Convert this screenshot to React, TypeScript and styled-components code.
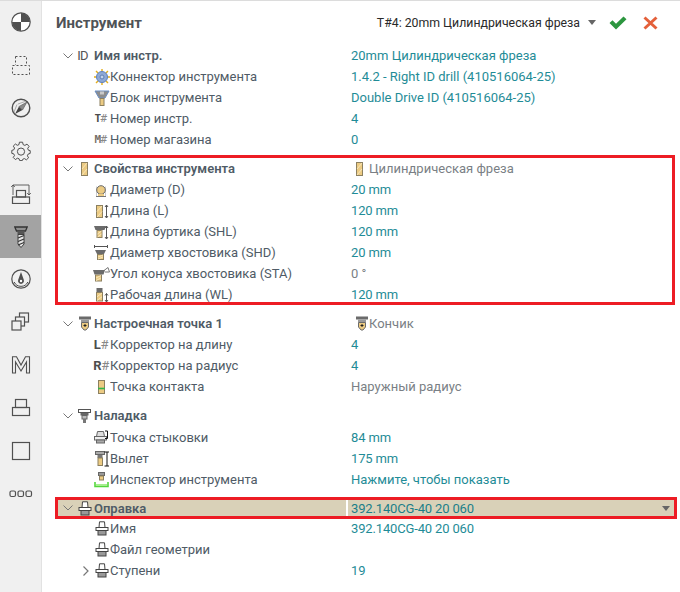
import React from 'react';
import styled, { createGlobalStyle } from 'styled-components';

const Global = createGlobalStyle`
  html, body { margin: 0; padding: 0; background: #fff; }
  body { font-family: Roboto, "Liberation Sans", sans-serif; }
  * { box-sizing: border-box; }
`;

const Page = styled.div`
  display: flex;
  width: 680px;
  height: 592px;
  overflow: hidden;
  border-top: 1px solid #dcdcdc;
  background: #fff;
`;
const Sidebar = styled.nav`
  flex: 0 0 42px;
  background: #f0f0f0;
  border-right: 1px solid #e2e2e2;
  display: flex;
  flex-direction: column;
`;
const SideItem = styled.div<{ $active?: boolean }>`
  height: 42.83px;
  flex: none;
  display: flex;
  align-items: center;
  justify-content: center;
  color: ${p => (p.$active ? '#3f3f3f' : '#505050')};
  background: ${p => (p.$active ? '#a3a3a3' : 'transparent')};
`;
const Main = styled.main`
  flex: 1;
  min-width: 0;
  padding: 0 5px 0 13px;
`;
const Header = styled.header`
  height: 44px;
  padding-bottom: 1px;
  display: flex;
  align-items: center;
  padding-left: 1px;
  padding-right: 17px;
  color: #4f5357;
`;
const Title = styled.h1`
  margin: 0;
  font-size: 15px;
  font-weight: 700;
  flex: 1;
`;
const ToolPick = styled.span`
  font-size: 12.3px;
  color: #2a2a2a;
`;
const Caret = styled.span<{ $right?: number }>`
  display: inline-block;
  width: 0;
  height: 0;
  border-left: 4.5px solid transparent;
  border-right: 4.5px solid transparent;
  border-top: 5px solid #666;
  margin-left: ${p => (p.$right ? 'auto' : '8px')};
  margin-right: ${p => p.$right ?? 0}px;
`;
const Actions = styled.div`
  display: flex;
  align-items: center;
  gap: 16px;
  margin-left: 13px;
`;
const Group = styled.section<{ $mark?: boolean; $gap: number }>`
  position: relative;
  margin-top: ${p => p.$gap}px;
  &::after {
    content: ${p => (p.$mark ? '""' : 'none')};
    position: absolute;
    inset: -3px 0 0 0;
    border: 3px solid #ed1c24;
    pointer-events: none;
  }
`;
const Row = styled.div<{ $selected?: boolean; $tall?: boolean }>`
  position: relative;
  display: grid;
  grid-template-columns: 291px 1fr;
  height: ${p => (p.$tall ? 22 : 21)}px;
  padding-bottom: ${p => (p.$tall ? 1 : 0)}px;
  align-items: center;
  font-size: 13px;
  line-height: 21px;
  ${p => (p.$selected ? 'background: #d9d1b8; margin-right: -2px;' : '')}
  &::after {
    content: ${p => (p.$selected ? '""' : 'none')};
    position: absolute;
    inset: 0 0 -1px 0;
    border: 3px solid #ed1c24;
    pointer-events: none;
  }
`;
const NameCell = styled.div<{ $level: number }>`
  display: flex;
  align-items: center;
  height: 100%;
  padding-left: ${p => (p.$level ? 24 : 6)}px;
  min-width: 0;
`;
const Chevron = styled.span`
  flex: 0 0 14px;
  display: flex;
  align-items: center;
  justify-content: center;
  color: #777;
`;
const IconSlot = styled.span<{ $level: number }>`
  flex: 0 0 ${p => (p.$level ? 17 : 19)}px;
  display: flex;
  align-items: center;
  justify-content: center;
`;
const Label = styled.span<{ $bold?: boolean }>`
  white-space: nowrap;
  color: #4f5b66;
  font-weight: ${p => (p.$bold ? 600 : 400)};
`;
const Value = styled.div<{ $muted?: boolean; $selected?: boolean; $tight?: boolean }>`
  display: flex;
  align-items: center;
  height: 100%;
  min-width: 0;
  padding-left: ${p => (p.$selected ? 3 : 5)}px;
  color: ${p => (p.$muted ? '#7a7f85' : '#1f8c97')};
  letter-spacing: ${p => (p.$tight ? '-0.15px' : 'normal')};
  white-space: nowrap;
  ${p => (p.$selected ? 'border-left: 2px solid #fff; margin: 3px 0; height: 16px; color:#1b7f88;' : '')}
`;
const GlyphTag = styled.span<{ $tone?: string }>`
  font-family: "DejaVu Sans Mono", "Liberation Mono", monospace;
  font-size: 11px;
  letter-spacing: -0.6px;
  font-weight: 700;
  color: ${p => p.$tone ?? '#4d4d4d'};
  line-height: 1;
  white-space: nowrap;
  margin-left: -2px;
  i {
    font-style: normal;
    font-weight: 400;
    color: #888;
  }
`;
const SansTag = styled(GlyphTag)`
  font-family: Roboto, "Liberation Sans", sans-serif;
  font-size: 13px;
  letter-spacing: -0.3px;
  margin-left: -1px;
  i {
    font-size: 13px;
  }
`;
const IdMark = styled.span`
  font-family: Roboto, "Liberation Sans", sans-serif;
  font-size: 13px;
  letter-spacing: -0.8px;
  color: #555;
  margin-left: -4px;
`;
const InlineIcon = styled.span`
  display: inline-flex;
  width: 18px;
  padding-left: 4px;
`;

const G = '#6b6b6b';
const Tan = '#eccb83';
const Ico: React.FC<{ children: React.ReactNode; w?: number; h?: number }> = ({ children, w = 16, h = 16 }) => (
  <svg width={w} height={h} viewBox={`0 0 ${w} ${h}`} fill="none">
    {children}
  </svg>
);
const Hatch = ({ x, y, w, h }: { x: number; y: number; w: number; h: number }) => (
  <>
    <rect x={x + 0.5} y={y + 0.5} width={w - 1} height={h - 1} fill={Tan} stroke="#8c8060" />
    <path d={`M${x + 1} ${y + h / 2}L${x + w - 1} ${y + 1}M${x + 1} ${y + h - 1}L${x + w - 1} ${y + h / 2}`} stroke="#f7e6bb" />
  </>
);
const Arrow = ({ x, y1, y2 }: { x: number; y1: number; y2: number }) => (
  <path d={`M${x} ${y1}V${y2}M${x - 1.5} ${y1 + 2}L${x} ${y1}L${x + 1.5} ${y1 + 2}M${x - 1.5} ${y2 - 2}L${x} ${y2}L${x + 1.5} ${y2 - 2}`} stroke="#555" />
);
const Connector = () => (
  <Ico>
    <path d="M8 0V2M8 14V16M0 8H2M14 8H16M2 2L4 4M12 12L14 14M14 2L12 4M2 14L4 12" stroke="#e3ad19" strokeWidth="1.4" />
    <circle cx="8" cy="8" r="5.5" fill="#8fa9d6" stroke="#5f7fb5" />
    <circle cx="8" cy="8" r="2" fill="#c5d3ea" stroke="#5f7fb5" />
  </Ico>
);
const BlockIcon = () => (
  <Ico>
    <path d="M1 1H15L11 8H5Z" fill="#8d8d8d" stroke="#6a8fc4" />
    <rect x="6" y="1.5" width="4" height="3" fill="#c9c9c9" />
    <rect x="6" y="8.5" width="4" height="7" fill={Tan} stroke="#8c8060" />
  </Ico>
);
const Cyl = () => (
  <Ico w={9} h={14}>
    <Hatch x={1} y={0} w={7} h={14} />
  </Ico>
);
const Diam = () => (
  <Ico>
    <path d="M2 14.5H12" stroke="#777" />
    <path d="M2.5 4.5V14M11.5 4.5V14" stroke="#ccc" />
    <circle cx="7" cy="8" r="4.3" fill={Tan} stroke="#6b6b6b" />
    <path d="M4 14H10V12H4Z" fill={Tan} />
  </Ico>
);
const Len = () => (
  <Ico>
    <Hatch x={2} y={2} w={7} h={13} />
    <Arrow x={12.5} y1={2} y2={15} />
  </Ico>
);
const Shl = () => (
  <Ico>
    <path d="M0 2H12L10.5 6H1.5Z" fill={G} />
    <Hatch x={2.5} y={6} w={6} h={8} />
    <Arrow x={12.5} y1={2} y2={15} />
  </Ico>
);
const Shd = () => (
  <Ico>
    <path d="M0 1.5H14M0.5 0V3M13.5 0V3" stroke="#555" />
    <path d="M1 5H12L10 9H3Z" fill={G} />
    <Hatch x={3} y={9} w={7} h={6} />
  </Ico>
);
const Sta = () => (
  <Ico w={17}>
    <path d="M0 4H12L10.5 8.5H1.5Z" fill={G} />
    <Hatch x={2} y={8.5} w={7} h={7} />
    <path d="M11 4.5L15 1.5M12 6H16.5M15 1.5L16.5 6" stroke="#777" />
  </Ico>
);
const Wl = () => (
  <Ico>
    <rect x="2.5" y="1" width="6" height="4" fill={G} />
    <Hatch x={2} y={5} w={7} h={9.5} />
    <Arrow x={12.5} y1={6.5} y2={15} />
  </Ico>
);
const SetPoint = () => (
  <Ico w={14} h={15}>
    <rect x="1" y="0.5" width="12" height="3" fill={G} />
    <rect x="3" y="3.5" width="8" height="3" fill="#9a9a9a" />
    <path d="M3.5 6.5H10.5V11L8 14H6L3.5 11Z" fill={Tan} stroke="#6b6b6b" />
    <path d="M7 8V11M5.5 9.5H8.5" stroke="#222" />
  </Ico>
);
const Contact = () => (
  <Ico w={9} h={14}>
    <rect x="1.5" y="0.5" width="6" height="13" fill={Tan} stroke="#8c8060" />
    <path d="M1 8.5H8" stroke="#35b54a" strokeWidth="1.6" />
  </Ico>
);
const Setup = () => (
  <Ico w={13} h={14}>
    <rect x="0.5" y="0.5" width="12" height="3" fill="#fff" stroke="#555" />
    <rect x="2.5" y="4" width="8" height="2.5" fill="#666" />
    <rect x="4" y="6.5" width="5" height="3.5" fill="#bbb" stroke="#666" />
    <rect x="5" y="10" width="3" height="4" fill="#777" />
  </Ico>
);
const Dock = () => (
  <Ico>
    <path d="M3.5 1.5H9.5L10.5 6.5H2.5Z" fill="#ddd" stroke="#666" />
    <rect x="0.5" y="6.5" width="12" height="3.5" fill="#eee" stroke="#666" />
    <rect x="2.5" y="10" width="8" height="3" fill="#aaa" stroke="#666" />
    <path d="M11 1H13.5V8.5H11" stroke="#111" />
  </Ico>
);
const Overhang = () => (
  <Ico>
    <rect x="1.5" y="0.5" width="9" height="3" fill="#aaa" stroke="#666" />
    <rect x="3.5" y="4" width="5" height="3" fill="#777" />
    <rect x="4" y="7" width="4.5" height="7.5" fill={Tan} stroke="#8c8060" />
    <path d="M10.5 15H15M13 1V15M10.5 1H15" stroke="#111" />
  </Ico>
);
const Inspect = () => (
  <Ico>
    <rect x="4.5" y="0.5" width="6" height="3" fill="#999" stroke="#666" />
    <rect x="5.5" y="4" width="4" height="4" fill={Tan} stroke="#8c8060" />
    <path d="M1 10V14.5H14V10" stroke="#54d63c" strokeWidth="1.6" />
    <rect x="2" y="12" width="11" height="2" fill="#a6ee8f" />
  </Ico>
);
const Holder = () => (
  <Ico w={14} h={15}>
    <path d="M4.5 0.8H9.5L10 6.5H4Z" fill="#fff" stroke="#444" />
    <rect x="1" y="6.5" width="12" height="3" fill="#fff" stroke="#444" />
    <rect x="3" y="9.5" width="8" height="4.5" fill="#999" stroke="#444" />
  </Ico>
);
const Tag = ({ a, tone }: { a: string; tone?: string }) => (
  <GlyphTag $tone={tone}>
    {a}
    <i>#</i>
  </GlyphTag>
);
const WideTag = ({ a }: { a: string }) => (
  <SansTag>
    {a}
    <i>#</i>
  </SansTag>
);
const Down = () => (
  <svg width="10" height="6" viewBox="0 0 10 6" fill="none">
    <path d="M0.5 0.5L5 5L9.5 0.5" stroke="currentColor" strokeWidth="1" />
  </svg>
);
const Right = () => (
  <svg width="6" height="10" viewBox="0 0 6 10" fill="none">
    <path d="M0.5 0.5L5 5L0.5 9.5" stroke="currentColor" strokeWidth="1.2" />
  </svg>
);

type Item = { icon: React.ReactNode; label: string; value?: string; muted?: boolean; more?: boolean };
type Section = {
  gap: number;
  icon: React.ReactNode;
  title: string;
  value: React.ReactNode;
  muted?: boolean;
  mark?: boolean;
  selected?: boolean;
  tall?: boolean;
  items: Item[];
};

const isTight = (v: unknown) => typeof v === 'string' && /^(\d+ mm|392.*)$/.test(v);

const sections: Section[] = [
  {
    gap: 0,
    icon: <IdMark>ID</IdMark>,
    title: 'Имя инстр.',
    value: '20mm Цилиндрическая фреза',
    items: [
      { icon: <Connector />, label: 'Коннектор инструмента', value: '1.4.2 - Right ID drill (410516064-25)' },
      { icon: <BlockIcon />, label: 'Блок инструмента', value: 'Double Drive ID (410516064-25)' },
      { icon: <Tag a="T" />, label: 'Номер инстр.', value: '4' },
      { icon: <Tag a="M" tone="#77706a" />, label: 'Номер магазина', value: '0' },
    ],
  },
  {
    gap: 8,
    mark: true,
    icon: <Cyl />,
    title: 'Свойства инструмента',
    value: (
      <>
        <InlineIcon>
          <Cyl />
        </InlineIcon>
        Цилиндрическая фреза
      </>
    ),
    muted: true,
    items: [
      { icon: <Diam />, label: 'Диаметр (D)', value: '20 mm' },
      { icon: <Len />, label: 'Длина (L)', value: '120 mm' },
      { icon: <Shl />, label: 'Длина буртика (SHL)', value: '120 mm' },
      { icon: <Shd />, label: 'Диаметр хвостовика (SHD)', value: '20 mm' },
      { icon: <Sta />, label: 'Угол конуса хвостовика (STA)', value: '0 °', muted: true },
      { icon: <Wl />, label: 'Рабочая длина (WL)', value: '120 mm' },
    ],
  },
  {
    gap: 8,
    icon: <SetPoint />,
    title: 'Настроечная точка 1',
    value: (
      <>
        <InlineIcon>
          <SetPoint />
        </InlineIcon>
        Кончик
      </>
    ),
    muted: true,
    items: [
      { icon: <WideTag a="L" />, label: 'Корректор на длину', value: '4' },
      { icon: <WideTag a="R" />, label: 'Корректор на радиус', value: '4' },
      { icon: <Contact />, label: 'Точка контакта', value: 'Наружный радиус', muted: true },
    ],
  },
  {
    gap: 8,
    tall: true,
    icon: <Setup />,
    title: 'Наладка',
    value: '',
    items: [
      { icon: <Dock />, label: 'Точка стыковки', value: '84 mm' },
      { icon: <Overhang />, label: 'Вылет', value: '175 mm' },
      { icon: <Inspect />, label: 'Инспектор инструмента', value: 'Нажмите, чтобы показать' },
    ],
  },
  {
    gap: 7,
    selected: true,
    icon: <Holder />,
    title: 'Оправка',
    value: '392.140CG-40 20 060',
    items: [
      { icon: <Holder />, label: 'Имя', value: '392.140CG-40 20 060' },
      { icon: <Holder />, label: 'Файл геометрии' },
      { icon: <Holder />, label: 'Ступени', value: '19', more: true },
    ],
  },
];

const s = { fill: 'none', stroke: 'currentColor', strokeWidth: 1.2 };
const sideIcons: React.ReactNode[] = [
  <svg width="20" height="20" viewBox="0 0 20 20" key="0">
    <circle cx="10" cy="10" r="9.2" fill="#fff" stroke="#505050" strokeWidth="1.2" />
    <path d="M10 10V1A9 9 0 0 1 19 10ZM10 10V19A9 9 0 0 1 1 10Z" fill="#505050" />
  </svg>,
  <svg width="18" height="19" viewBox="0 0 18 19" key="1">
    <path d="M3.5 0.5H14.5V9M3.5 0.5V9M0.5 9.5H17.5V18.5H0.5Z" {...s} strokeWidth="1" strokeDasharray="2 2" />
  </svg>,
  <svg width="20" height="20" viewBox="0 0 20 20" key="2">
    <circle cx="10" cy="10" r="8.8" {...s} strokeWidth="1.4" />
    <path d="M4 16L8 8.5L11.5 12Z" fill="#444" />
    <path d="M16 4L8 8.5L11.5 12Z" fill="#8a8a8a" stroke="#555" strokeWidth="0.6" />
    <path d="M3 14L6 6.5M14 3.5L7 6" stroke="#999" strokeWidth="0.8" fill="none" />
  </svg>,
  <svg width="20" height="20" viewBox="0 0 20 20" key="3">
    <path
      d="M8.4 1.2H11.6L12.1 3.6L13.9 4.4L16 3.1L18.1 5.4L16.7 7.4L17.4 9.2L19.2 9.6V12.4L17.2 13L16.4 14.8L17.6 16.8L15.4 18.8L13.4 17.6L11.8 18.2L11.3 19.6H8.7L8.1 17.8L6.4 17.2L4.4 18.6L2.2 16.4L3.5 14.6L2.7 12.8L0.8 12.4V9.4L2.8 8.8L3.6 7L2.2 5.2L4.4 3L6.3 4.3L8 3.6Z"
      {...s}
      strokeWidth="1"
    />
    <circle cx="10" cy="10.6" r="3.6" {...s} strokeWidth="1" />
  </svg>,
  <svg width="22" height="20" viewBox="0 0 22 20" key="4">
    <rect x="6.5" y="6.5" width="9" height="6.5" {...s} />
    <rect x="2.5" y="13" width="17" height="6.5" {...s} />
    <path d="M3 11V1M19 1V11M3 1H19M1.2 3L3 1L4.8 3M17.2 9L19 11L20.8 9" {...s} strokeWidth="0.9" />
  </svg>,
  <svg width="14" height="22" viewBox="0 0 14 22" key="5">
    <path d="M0.8 1H13.2L11.5 5H2.5Z" fill="#8f8f8f" stroke="#333" strokeWidth="1.3" />
    <path d="M3.5 5H10.5V8.5H3.5Z" fill="#555" />
    <path d="M4 8.5H10V18L7 21.5L4 18Z" fill="#e6e6e6" stroke="#333" strokeWidth="0.9" />
    <path d="M4 12L10 9.5M4 15.5L10 13M4 19L10 16.5" stroke="#333" strokeWidth="1.1" />
  </svg>,
  <svg width="20" height="20" viewBox="0 0 20 20" key="6">
    <circle cx="10" cy="10" r="9.2" {...s} />
    <path d="M3.2 13A7.5 7.5 0 0 0 16.8 13" {...s} strokeWidth="1" />
    <path d="M10 3L12.8 10.8A3 3 0 1 1 7.2 10.8Z" fill="#505050" />
    <circle cx="10" cy="12" r="1.2" fill="#fff" />
  </svg>,
  <svg width="20" height="20" viewBox="0 0 20 20" key="7">
    <rect x="8.5" y="1" width="9" height="9" {...s} />
    <rect x="4.5" y="5" width="9" height="9" fill="#f0f0f0" stroke="currentColor" strokeWidth="1.2" />
    <rect x="1" y="9" width="9" height="9" fill="#f0f0f0" stroke="currentColor" strokeWidth="1.2" />
  </svg>,
  <svg width="20" height="18" viewBox="0 0 20 18" key="8">
    <path d="M1.5 0.8H5.5L10 9L14.5 0.8H18.5V17H15.5V6L10 15L4.5 6V17H1.5Z" {...s} strokeWidth="1.1" />
  </svg>,
  <svg width="20" height="20" viewBox="0 0 20 20" key="9">
    <rect x="4.5" y="1.5" width="11" height="8" {...s} />
    <rect x="1.5" y="9.5" width="17" height="8" {...s} />
  </svg>,
  <svg width="20" height="20" viewBox="0 0 20 20" key="10">
    <rect x="1.5" y="1.5" width="17" height="17" {...s} />
  </svg>,
  <svg width="24" height="10" viewBox="0 0 24 10" key="11">
    <rect x="1" y="2" width="5.5" height="5.5" rx="1.5" {...s} />
    <rect x="9" y="2" width="5.5" height="5.5" rx="1.5" {...s} />
    <rect x="17" y="2" width="5.5" height="5.5" rx="1.5" {...s} />
  </svg>,
];

export default function App() {
  return (
    <Page>
      <Global />
      <Sidebar>
        {sideIcons.map((ic, i) => (
          <SideItem key={i} $active={i === 5}>
            {ic}
          </SideItem>
        ))}
      </Sidebar>
      <Main>
        <Header>
          <Title>Инструмент</Title>
          <ToolPick>T#4: 20mm Цилиндрическая фреза</ToolPick>
          <Caret />
          <Actions>
            <svg width="18" height="14" viewBox="0 0 18 14">
              <path d="M0.5 7L3.5 4.2L7 7.7L14.5 0.5L17.5 3.3L7 13.5Z" fill="#2c963f" />
            </svg>
            <svg width="15" height="14" viewBox="0 0 15 14">
              <path d="M1.5 1.5L13.5 12.5M13.5 1.5L1.5 12.5" stroke="#e4603a" strokeWidth="3" />
            </svg>
          </Actions>
        </Header>
        {sections.map(sec => (
          <Group key={sec.title} $gap={sec.gap} $mark={sec.mark}>
            <Row $selected={sec.selected} $tall={sec.tall}>
              <NameCell $level={0}>
                <Chevron>
                  <Down />
                </Chevron>
                <IconSlot $level={0}>{sec.icon}</IconSlot>
                <Label $bold>{sec.title}</Label>
              </NameCell>
              <Value $muted={sec.muted} $selected={sec.selected} $tight={isTight(sec.value)}>
                {sec.value}
                {sec.selected && <Caret $right={7} />}
              </Value>
            </Row>
            {sec.items.map(it => (
              <Row key={it.label}>
                <NameCell $level={1}>
                  <Chevron>{it.more && <Right />}</Chevron>
                  <IconSlot $level={1}>{it.icon}</IconSlot>
                  <Label>{it.label}</Label>
                </NameCell>
                <Value $muted={it.muted} $tight={isTight(it.value)}>
                  {it.value}
                </Value>
              </Row>
            ))}
          </Group>
        ))}
      </Main>
    </Page>
  );
}
